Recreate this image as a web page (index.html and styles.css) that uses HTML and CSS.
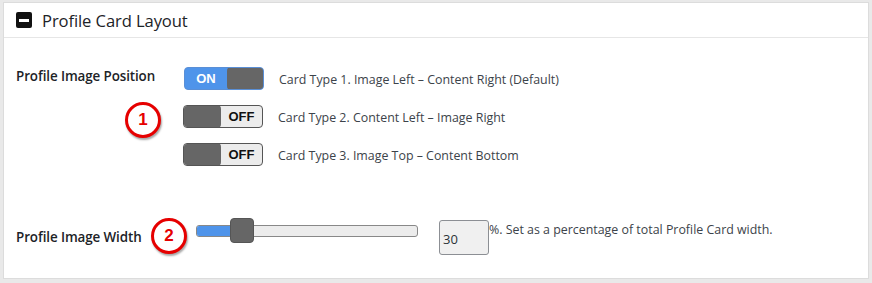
FILE: index.html
```html
<!DOCTYPE html>
<html>
<head>
<meta charset="utf-8">
<link rel="stylesheet" href="styles.css">
</head>
<body>
<div class="card">
  <div class="card-head">
    <span class="collapse-icon"><span class="bar"></span></span>
    <h2 class="card-title">Profile Card Layout</h2>
  </div>
  <div class="card-body">
    <div class="row row-position">
      <div class="label">Profile Image Position</div>
      <div class="options">
        <div class="option">
          <span class="toggle on"><span class="t-text">ON</span><span class="t-knob"></span></span>
          <span class="opt-text">Card Type 1. Image Left – Content Right (Default)</span>
        </div>
        <div class="option">
          <span class="toggle off"><span class="t-knob"></span><span class="t-text">OFF</span></span>
          <span class="opt-text">Card Type 2. Content Left – Image Right</span>
        </div>
        <div class="option">
          <span class="toggle off"><span class="t-knob"></span><span class="t-text">OFF</span></span>
          <span class="opt-text">Card Type 3. Image Top – Content Bottom</span>
        </div>
      </div>
      <span class="badge badge-1">1</span>
    </div>
    <div class="row row-width">
      <div class="label">Profile Image Width</div>
      <span class="badge badge-2">2</span>
      <div class="slider">
        <div class="track"><div class="fill" style="width:44px"></div></div>
        <div class="thumb" style="left:34px"></div>
      </div>
      <div class="num-box">30</div>
      <div class="hint">%. Set as a percentage of total Profile Card width.</div>
    </div>
  </div>
</div>
</body>
</html>
```
FILE: styles.css
```css
html, body { margin: 0; padding: 0; }
body {
  background: #e9e9e9;
  width: 872px;
  height: 283px;
  font-family: "Open Sans", "Noto Sans", sans-serif;
  color: #3c434a;
  padding: 2px 3px 3px 3px;
  box-sizing: border-box;
}
.card {
  background: #fff;
  border: 1px solid #dcdcdc;
  height: 277px;
  box-sizing: border-box;
}
.card-head {
  display: flex;
  align-items: center;
  height: 34px;
  border-bottom: 1px solid #e6e6e6;
  padding-left: 12px;
}
.collapse-icon {
  width: 16px;
  height: 16px;
  background: #111;
  border-radius: 2px;
  display: flex;
  align-items: center;
  justify-content: center;
  margin-right: 10px;
}
.collapse-icon .bar {
  width: 10px;
  height: 3px;
  background: #fff;
}
.card-title {
  margin: 0;
  font-size: 16.6px;
  font-weight: 400;
  color: #1d2327;
  letter-spacing: -0.1px;
}
.card-body { position: relative; }
.row { position: relative; display: flex; }
.label {
  font-size: 13.4px;
  font-weight: 600;
  color: #1d2327;
  width: 167px;
  padding-left: 12px;
  letter-spacing: -0.1px;
}
.row-position { padding-top: 29px; }
.row-position .label { padding-top: 0; }
.options { display: flex; flex-direction: column; gap: 15px; margin-left: 0; }
.option { display: flex; align-items: center; }
.toggle {
  width: 80px;
  height: 23px;
  box-sizing: border-box;
  border-radius: 4px;
  display: flex;
  overflow: hidden;
  border: 1px solid #666;
}
.toggle.on { background: #4f94ea; border-color: #5a8fd6; margin-left: 1px; }
.toggle.off { background: #ececec; border-color: #555; }
.t-text {
  width: 42px;
  display: flex;
  align-items: center;
  justify-content: center;
  font-family: "Liberation Sans", Arial, sans-serif;
  font-weight: 700;
  font-size: 13px;
}
.toggle.on .t-text { color: #fff; }
.toggle.off .t-text { color: #111; }
.t-knob {
  flex: 1;
  background: #666;
  border-radius: 4px;
}
.toggle.off .t-knob { flex: 0 0 38px; margin: -1px 0 -1px -1px; }
.toggle.on .t-knob { margin: -1px -1px -1px 0; }
.opt-text {
  font-size: 12.4px;
  color: #3c434a;
  margin-left: 15px;
  padding-top: 2px;
}
.badge {
  position: absolute;
  width: 30px;
  height: 30px;
  border: 3px solid #e60000;
  border-radius: 50%;
  background: #fff;
  color: #e60000;
  font-family: "Liberation Sans", Arial, sans-serif;
  font-weight: 700;
  font-size: 17px;
  display: flex;
  align-items: center;
  justify-content: center;
  box-shadow: 1px 2px 2px rgba(0,0,0,0.35);
  box-sizing: content-box;
}
.badge-1 { left: 121px; top: 64px; }
.row-width { padding-top: 37px; align-items: flex-start; }
.badge-2 { left: 147px; top: 52px; }
.row-width .label { position: absolute; left: 0; top: 0; padding-top: 62px; width: auto; }
.slider {
  position: relative;
  margin-left: 192px;
  margin-top: 15px;
  width: 222px;
  height: 25px;
}
.track {
  position: absolute;
  left: 0; right: 0; top: 7px;
  height: 12px;
  background: #ececec;
  border: 1px solid #888;
  border-radius: 3px;
  box-sizing: border-box;
  overflow: hidden;
}
.fill { height: 100%; background: #4f94ea; }
.thumb {
  position: absolute;
  top: 0;
  width: 24px;
  height: 25px;
  background: #666;
  border: 1px solid #555;
  border-radius: 4px;
  box-sizing: border-box;
}
.num-box {
  margin-left: 21px;
  margin-top: 17px;
  width: 50px;
  height: 35px;
  box-sizing: border-box;
  border: 1px solid #8c8f94;
  border-radius: 3px;
  background: #f0f0f0;
  font-size: 13px;
  color: #2c3338;
  padding: 9px 0 0 3px;
}
.hint {
  font-size: 12.4px;
  margin-top: 18px;
  margin-left: 0;
}
```
